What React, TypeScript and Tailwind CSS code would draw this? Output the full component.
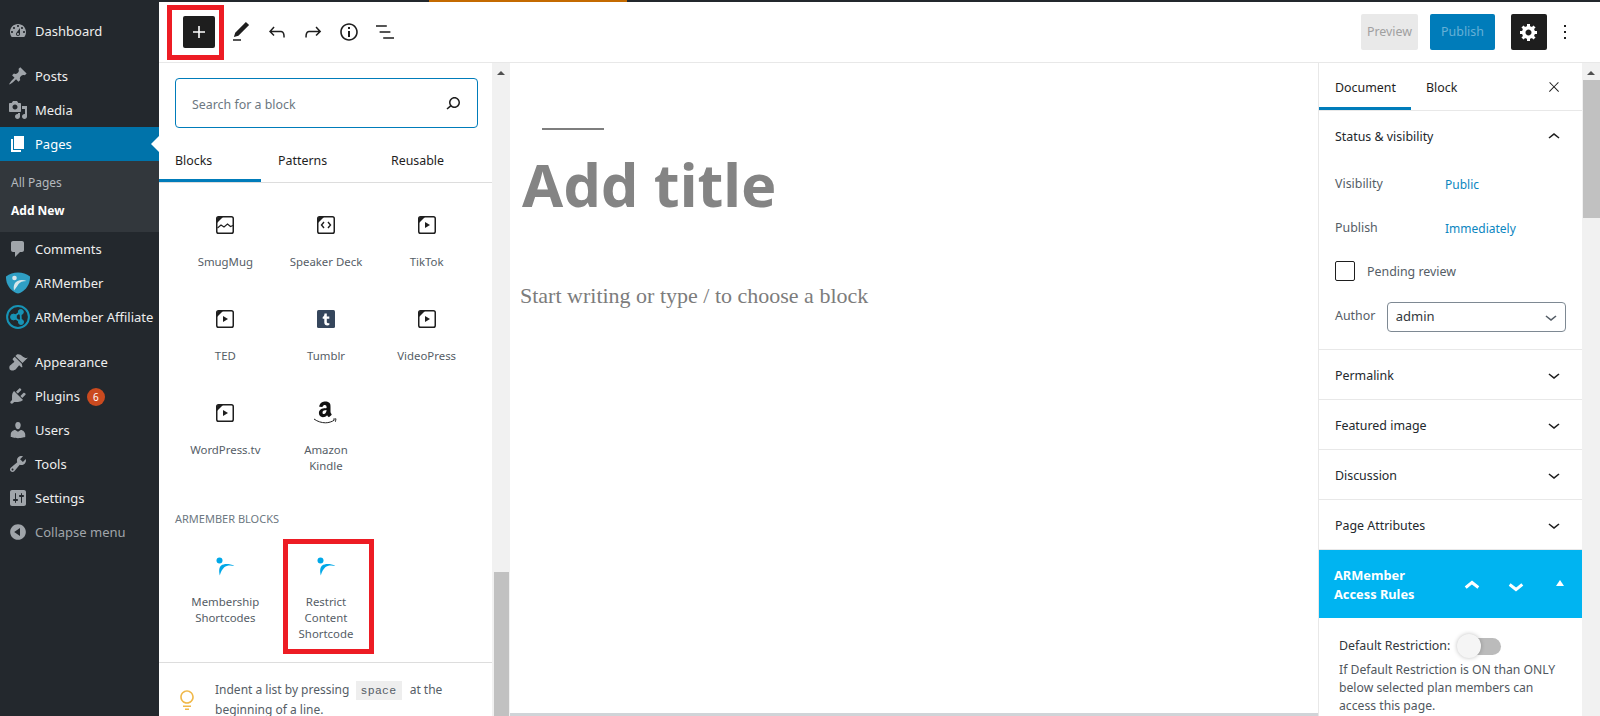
import type { ReactNode } from "react";

const SANS = "font-['Noto_Sans',sans-serif]";

type IconProps = { d: string; box?: number; className: string };

const Icon = ({ d, box = 24, className }: IconProps) => (
  <svg viewBox={`0 0 ${box} ${box}`} className={className} fill="currentColor">
    <path d={d} />
  </svg>
);

// dashicons for the admin menu
const DASH = {
  dashboard:
    "M3.76 16h12.48c1.1-1.37 1.76-3.11 1.76-5 0-4.42-3.58-8-8-8s-8 3.58-8 8c0 1.89.66 3.63 1.76 5zM10 4c.55 0 1 .45 1 1s-.45 1-1 1-1-.45-1-1 .45-1 1-1zM6 6c.55 0 1 .45 1 1s-.45 1-1 1-1-.45-1-1 .45-1 1-1zm8 0c.55 0 1 .45 1 1s-.45 1-1 1-1-.45-1-1 .45-1 1-1zm-5.37 5.55L12 7v6c0 1.1-.9 2-2 2s-2-.9-2-2c0-.57.24-1.08.63-1.45zM4 10c.55 0 1 .45 1 1s-.45 1-1 1-1-.45-1-1 .45-1 1-1zm12 0c.55 0 1 .45 1 1s-.45 1-1 1-1-.45-1-1 .45-1 1-1zm-5 3c0-.55-.45-1-1-1s-1 .45-1 1 .45 1 1 1 1-.45 1-1z",
  posts:
    "M10.44 3.02l1.82-1.82 6.36 6.35-1.83 1.82c-1.05-.68-2.48-.57-3.41.36l-.75.75c-.92.93-1.04 2.35-.35 3.41l-1.83 1.82-2.41-2.41-2.8 2.79c-.42.42-3.38 2.71-3.8 2.29s1.86-3.39 2.28-3.81l2.79-2.79L4.1 9.36l1.83-1.82c1.05.69 2.48.57 3.4-.36l.75-.75c.93-.92 1.05-2.35.36-3.41z",
  media:
    "M13 11V4c0-.55-.45-1-1-1h-1.67L9 1H5L3.67 3H2c-.55 0-1 .45-1 1v7c0 .55.45 1 1 1h10c.55 0 1-.45 1-1zM7 4.5c1.38 0 2.5 1.12 2.5 2.5S8.38 9.5 7 9.5 4.5 8.38 4.5 7 5.62 4.5 7 4.5zM14 6h5v10.5c0 1.38-1.12 2.5-2.5 2.5S14 17.88 14 16.5s1.12-2.5 2.5-2.5c.17 0 .34.02.5.05V9h-3V6zm-4 8.05V13h2v3.5c0 1.38-1.12 2.5-2.5 2.5S7 17.88 7 16.5 8.12 14 9.5 14c.17 0 .34.02.5.05z",
  pages: "M6 15V2h10v13H6zm-1 1h8v2H3V5h2v11z",
  comments: "M5 2h9c1.1 0 2 .9 2 2v7c0 1.1-.9 2-2 2h-2l-5 5v-5H5c-1.1 0-2-.9-2-2V4c0-1.1.9-2 2-2z",
  appearance:
    "M14.48 11.06L7.41 3.99l1.5-1.5c.5-.56 2.3-.47 3.51.32 1.21.8 1.43 1.28 2.91 2.1 1.18.64 2.45 1.26 4.45.85zm-.71.71L6.7 4.7 4.93 6.47c-.39.39-.39 1.02 0 1.41l1.06 1.06c.39.39.39 1.03 0 1.42-.6.6-1.43 1.11-2.21 1.69-.35.26-.7.53-1.01.84C1.43 13.23.94 15.07 1.59 17c.1.3.26.57.5.8s.5.4.8.5c1.93.65 3.77.16 5.12-1.19.3-.31.57-.66.84-1.01.57-.78 1.08-1.61 1.69-2.21.39-.39 1.03-.39 1.42 0l1.06 1.06c.39.39 1.02.39 1.41 0z",
  plugins:
    "M13.11 4.36L9.87 7.6 8 5.73l3.24-3.24c.35-.34 1.05-.2 1.56.32.52.51.66 1.21.31 1.55zm-8 1.77l.91-1.12 9.01 9.01-1.19.84c-.71.71-2.63 1.16-3.82 1.16H6.14L4.9 17.26c-.59.59-1.54.59-2.12 0-.59-.58-.59-1.53 0-2.12l1.24-1.24v-3.88c0-1.13.4-3.19 1.09-3.89zm7.26 3.97l3.24-3.24c.34-.35 1.04-.21 1.55.31.52.51.66 1.21.31 1.55l-3.24 3.25z",
  users:
    "M10 9.25c-2.27 0-2.73-3.44-2.73-3.44C7 4.02 7.82 2 9.97 2c2.16 0 2.98 2.02 2.71 3.81 0 0-.41 3.44-2.68 3.44zm0 2.57L12.72 10c2.39 0 4.52 2.33 4.52 4.53v2.49s-3.65 1.13-7.24 1.13c-3.65 0-7.24-1.13-7.24-1.13v-2.49c0-2.25 1.94-4.48 4.47-4.48z",
  tools:
    "M16.68 9.77c-1.34 1.34-3.3 1.67-4.95.99l-5.41 6.52c-.99.99-2.59.99-3.58 0s-.99-2.59 0-3.57l6.52-5.42c-.68-1.65-.35-3.61.99-4.95 1.28-1.28 3.12-1.62 4.72-1.06l-2.89 2.89 2.82 2.82 2.86-2.87c.53 1.58.18 3.39-1.08 4.65zM3.81 16.21c.4.39 1.04.39 1.43 0 .4-.4.4-1.04 0-1.43-.39-.4-1.03-.4-1.43 0-.39.39-.39 1.03 0 1.43z",
  settings:
    "M18 16V4c0-1.1-.9-2-2-2H4c-1.1 0-2 .9-2 2v12c0 1.1.9 2 2 2h12c1.1 0 2-.9 2-2zM8 11h1c.55 0 1 .45 1 1s-.45 1-1 1H8v1.5c0 .28-.22.5-.5.5s-.5-.22-.5-.5V13H6c-.55 0-1-.45-1-1s.45-1 1-1h1V5.5c0-.28.22-.5.5-.5s.5.22.5.5V11zm5-2h-1c-.55 0-1-.45-1-1s.45-1 1-1h1V5.5c0-.28.22-.5.5-.5s.5.22.5.5V7h1c.55 0 1 .45 1 1s-.45 1-1 1h-1v5.5c0 .28-.22.5-.5.5s-.5-.22-.5-.5V9z",
  collapse: "M10 2.16c4.33 0 7.84 3.51 7.84 7.84s-3.51 7.84-7.84 7.84S2.16 14.33 2.16 10 5.71 2.16 10 2.16zm2 11.72V6.12L6.18 9.97z",
  cog: "M18 12h-2.18c-.17.7-.44 1.35-.81 1.93l1.54 1.54-2.1 2.1-1.54-1.54c-.58.36-1.23.63-1.91.79V19H8v-2.18c-.68-.16-1.33-.43-1.91-.79l-1.54 1.54-2.12-2.12 1.54-1.54c-.36-.58-.63-1.23-.79-1.91H1V9.03h2.17c.16-.7.44-1.35.8-1.94L2.43 5.55l2.1-2.1 1.54 1.54c.58-.37 1.24-.64 1.93-.81V2h3v2.18c.68.16 1.33.43 1.91.79l1.54-1.54 2.12 2.12-1.54 1.54c.36.59.64 1.24.8 1.94H18V12zm-8.5 1.5c1.66 0 3-1.34 3-3s-1.34-3-3-3-3 1.34-3 3 1.34 3 3 3z",
};

// block editor toolbar icons
const WP = {
  plus: "M18 11.2h-5.2V6h-1.6v5.2H6v1.6h5.2V18h1.6v-5.2H18z",
  edit: "M20.1 5.1L16.9 2 6.2 12.7l-1.3 4.4 4.5-1.3L20.1 5.1zM4 20.8h8v-1.5H4v1.5z",
  undo: "M18.3 11.7c-.6-.6-1.4-.9-2.3-.9H6.7l2.9-3.3-1.1-1-4.5 5L8.5 16l1-1-2.7-2.7H16c.5 0 .9.2 1.3.5 1 1 1 3.4 1 4.5v.3h1.5v-.2c0-1.5 0-4.3-1.5-5.7z",
  redo: "M15.6 6.5l-1.1 1 2.9 3.3H8c-.9 0-1.7.3-2.3.9-1.4 1.5-1.4 4.2-1.4 5.6v.2h1.5v-.3c0-1.1 0-3.5 1-4.5.3-.3.7-.5 1.3-.5h9.2L14.5 15l1.1 1.1 4.6-4.6-4.6-5z",
  info: "M12 3.2c-4.8 0-8.8 3.9-8.8 8.8 0 4.8 3.9 8.8 8.8 8.8 4.8 0 8.8-3.9 8.8-8.8 0-4.8-4-8.8-8.8-8.8zm0 16c-4 0-7.2-3.3-7.2-7.2C4.8 8 8 4.8 12 4.8s7.2 3.3 7.2 7.2c0 4-3.2 7.2-7.2 7.2zM11 17h2v-6h-2v6zm0-8h2V7h-2v2z",
  list: "M13.8 5.2H3v1.5h10.8V5.2zm-3.6 12v1.5H21v-1.5H10.2zm7.2-6H6.6v1.5h10.8v-1.5z",
  more: "M13 19h-2v-2h2v2zm0-6h-2v-2h2v2zm0-6h-2V5h2v2z",
  search:
    "M13.5 6C10.5 6 8 8.5 8 11.5c0 1.1.3 2.1.9 3l-3.4 3 1 1.1 3.4-2.9c1 .9 2.2 1.4 3.6 1.4 3 0 5.5-2.5 5.5-5.5C19 8.5 16.5 6 13.5 6zm0 9.5c-2.2 0-4-1.8-4-4s1.8-4 4-4 4 1.8 4 4-1.8 4-4 4z",
  close: "M13 11.8l6.1-6.3-1-1-6.1 6.2-6.1-6.2-1 1 6.1 6.3-6.5 6.7 1 1 6.5-6.6 6.5 6.6 1-1z",
  up: "M6.5 12.4L12 8l5.5 4.4-.9 1.2L12 10l-4.5 3.6-1-1.2z",
  down: "M17.5 11.6L12 16l-5.5-4.4.9-1.2L12 14l4.5-3.6 1 1.2z",
  bulb: "M12 15.8c-3.7 0-6.8-3-6.8-6.8s3-6.8 6.8-6.8c3.7 0 6.8 3 6.8 6.8s-3.1 6.8-6.8 6.8zm0-12C9.1 3.8 6.8 6.1 6.8 9s2.4 5.2 5.2 5.2c2.9 0 5.2-2.4 5.2-5.2S14.9 3.8 12 3.8zM8 17.5h8V19H8zM10 20.5h4V22h-4z",
};

const ArmemberShield = () => (
  <svg viewBox="0 0 24 22" className="h-[22px] w-[24px]">
    <path d="M0 4.500C3.500 1.800 7.500 .5 12 .5s8.500 1.300 12 4c.3 7-3.500 13.500-10 16.500-1.300.5-2.700.5-4 0C3.500 18 -.3 11.500 0 4.500z" fill="#2f9fc4" />
    <circle cx="8.500" cy="6" r="2.300" fill="#d8e6ea" />
    <path d="M8 18.500c-.8-4.500.2-8 3.500-9.500 2.800-1.200 6-1.200 9 0-3.800 0-6.800 1-8.300 3.500-1.200 2-2.200 3.500-4.200 6z" fill="#d8e6ea" />
  </svg>
);

const AffiliateLogo = () => (
  <svg viewBox="0 0 24 24" className="h-[24px] w-[24px]" fill="#1793b5" stroke="#1793b5">
    <circle cx="12" cy="12" r="10.900" fill="none" strokeWidth="2" />
    <path d="M14.500 6.800L7.500 12l7.500 5.200L14.500 6.800" fill="none" strokeWidth="1.800" />
    <circle cx="14.800" cy="7" r="2.500" />
    <circle cx="7.500" cy="12" r="2.900" />
    <circle cx="15" cy="17" r="2.500" />
  </svg>
);

const Tiny = ({ kind }: { kind: "image" | "code" | "video" }) => (
  <svg viewBox="0 0 18 18" className="h-[18px] w-[18px]" fill="none">
    <rect x="0.750" y="0.750" width="16.500" height="16.500" rx="1.800" stroke="#1e1e1e" strokeWidth="1.500" />
    <path d="M1 7V2.500Q1 1 2.500 1H7z" fill="#1e1e1e" />
    {kind === "image" && <path d="M1.500 12l3.500-3 3 2 3.500-3 3 2.500 2.500-1" stroke="#1e1e1e" strokeWidth="1.100" />}
    {kind === "code" && <path d="M7 6L4.500 9 7 12M11 6l2.500 3L11 12" stroke="#1e1e1e" strokeWidth="1.400" />}
    {kind === "video" && <path d="M7 6l5 3-5 3z" fill="#1e1e1e" />}
  </svg>
);

const TumblrIcon = () => (
  <svg viewBox="0 0 18 18" className="h-[18px] w-[18px]">
    <rect width="18" height="18" rx="1.500" fill="#35465c" />
    <path d="M7.500 3.500h2.300v3h2.500v2.200H9.800v3.400c0 1 .8 1.300 2.500.9v2.100c-3 .8-5-.1-5-2.600V8.700H5.700V6.900c1.200-.4 1.700-1.800 1.800-3.400z" fill="#fff" />
  </svg>
);

const AmazonIcon = () => (
  <svg viewBox="0 0 26 24" className="h-[24px] w-[26px]">
    <path
      d="M15.500 9.500V9c-1.900.1-4 .5-4 2.500 0 1 .5 1.600 1.400 1.600.7 0 1.300-.4 1.700-1.100.5-.800.900-1.500.900-2.500zm2.700 6.500c-.2.200-.4.200-.6.100-.9-.7-1-1.100-1.500-1.800-1.400 1.500-2.400 1.900-4.300 1.900-2.200 0-3.900-1.400-3.900-4.100 0-2.100 1.100-3.600 2.800-4.300 1.400-.6 3.400-.7 4.900-.9v-.3c0-.6 0-1.400-.3-1.900-.3-.5-.9-.7-1.500-.7-1 0-1.900.5-2.100 1.600 0 .2-.2.500-.5.500l-2.600-.3c-.2 0-.5-.2-.4-.6C9.100 1.500 11.900.5 14.400.5c1.300 0 2.900.3 3.900 1.300 1.300 1.200 1.200 2.800 1.200 4.600v4.200c0 1.300.5 1.800 1 2.500.2.300.2.600 0 .8z"
      fill="#111"
      transform="translate(-2 0)"
    />
    <path d="M1 18c3.500 2.600 7.800 3.800 11.500 3.800 3 0 6.500-1 9-2.800" fill="none" stroke="#222" strokeWidth="1" />
    <path d="M20 18.200l3-.4-.6 3" fill="none" stroke="#222" strokeWidth="0.900" />
  </svg>
);

const BlockLogo = () => (
  <svg viewBox="0 0 20 20" className="h-[20px] w-[20px]" fill="#00a8e8">
    <circle cx="4.500" cy="3.500" r="3" />
    <path d="M4.800 18.500C3.800 14 3.900 10.500 6.200 8.600 9 6.500 14.500 6.500 19.500 9c-4-1-8-.8-10.200 1.200-2.200 2.100-3.500 4.700-4.500 8.300z" />
  </svg>
);

type MenuItem = { icon?: string; logo?: ReactNode; label: string; badge?: string; dim?: boolean };

const MENU_TOP: MenuItem[] = [{ icon: DASH.dashboard, label: "Dashboard" }];
const MENU_MID: MenuItem[] = [
  { icon: DASH.posts, label: "Posts" },
  { icon: DASH.media, label: "Media" },
];
const MENU_AFTER: MenuItem[] = [
  { icon: DASH.comments, label: "Comments" },
  { logo: <ArmemberShield />, label: "ARMember" },
  { logo: <AffiliateLogo />, label: "ARMember Affiliate" },
];
const MENU_BOTTOM: MenuItem[] = [
  { icon: DASH.appearance, label: "Appearance" },
  { icon: DASH.plugins, label: "Plugins", badge: "6" },
  { icon: DASH.users, label: "Users" },
  { icon: DASH.tools, label: "Tools" },
  { icon: DASH.settings, label: "Settings" },
  { icon: DASH.collapse, label: "Collapse menu", dim: true },
];

const MenuRow = ({ item }: { item: MenuItem }) => (
  <div className="flex h-[34px] items-center">
    <div className={`flex w-[35px] shrink-0 justify-center text-[#a0a5aa] ${item.logo ? "" : "pl-[1px]"}`}>
      {item.logo ?? <Icon d={item.icon!} box={20} className="h-[20px] w-[20px]" />}
    </div>
    <span className={`whitespace-nowrap pt-[2px] text-[13px] ${item.dim ? "text-[#a0a5aa]" : "text-[#eee]"}`}>{item.label}</span>
    {item.badge && (
      <span className="ml-[7px] mt-[2px] flex h-[18px] w-[18px] items-center justify-center rounded-full bg-[#ca4a1f] text-[10px] text-white">
        {item.badge}
      </span>
    )}
  </div>
);

const AdminMenu = () => (
  <aside className="flex w-[159px] shrink-0 flex-col bg-[#23282d] pt-[14px]">
    {MENU_TOP.map((m) => (
      <MenuRow key={m.label} item={m} />
    ))}
    <div className="h-[11px]" />
    {MENU_MID.map((m) => (
      <MenuRow key={m.label} item={m} />
    ))}
    <div className="relative flex h-[34px] items-center bg-[#0073aa] text-white">
      <div className="flex w-[35px] justify-center pl-[1px]">
        <Icon d={DASH.pages} box={20} className="h-[20px] w-[20px]" />
      </div>
      <span className="pt-[2px] text-[13px]">Pages</span>
      <div className="absolute right-0 top-[9px] h-0 w-0 border-y-[8px] border-r-[8px] border-y-transparent border-r-white" />
    </div>
    <div className="flex h-[71px] flex-col justify-center gap-[8px] bg-[#32373c] pl-[11px] text-[12px]">
      <span className="leading-[20px] text-[#b4b9be]">All Pages</span>
      <span className="font-bold leading-[20px] text-white">Add New</span>
    </div>
    {MENU_AFTER.map((m) => (
      <MenuRow key={m.label} item={m} />
    ))}
    <div className="h-[11px]" />
    {MENU_BOTTOM.map((m) => (
      <MenuRow key={m.label} item={m} />
    ))}
  </aside>
);

const TopBar = () => (
  <div className="relative flex h-[61px] shrink-0 items-center border-b border-[#e8e8e8] bg-white">
    <div className="ml-[24px] flex h-[32px] w-[32px] items-center justify-center rounded-[2px] bg-[#1e1e1e] text-white">
      <Icon d={WP.plus} className="h-[24px] w-[24px]" />
    </div>
    <div className="ml-[14px] flex items-center gap-[12px] text-[#1e1e1e]">
      <Icon d={WP.edit} className="h-[24px] w-[24px]" />
      <Icon d={WP.undo} className="h-[24px] w-[24px]" />
      <Icon d={WP.redo} className="h-[24px] w-[24px]" />
      <Icon d={WP.info} className="h-[24px] w-[24px]" />
      <Icon d={WP.list} className="h-[24px] w-[24px]" />
    </div>
    <div className="ml-auto flex items-center pr-[23px]">
      <div className="flex h-[36px] w-[57px] items-center justify-center rounded-[2px] bg-[#e9e9e9] text-[12.4px] text-[#a0a0a0]">Preview</div>
      <div className="ml-[12px] flex h-[36px] w-[65px] items-center justify-center rounded-[2px] bg-[#007cba] text-[12.4px] text-[#66b0d6]">Publish</div>
      <div className="ml-[16px] flex h-[36px] w-[36px] items-center justify-center rounded-[2px] bg-[#1e1e1e] text-white">
        <Icon d={DASH.cog} box={20} className="h-[20px] w-[20px]" />
      </div>
      <Icon d={WP.more} className="ml-[6px] h-[24px] w-[24px] text-[#1e1e1e]" />
    </div>
    {/* annotation round the inserter toggle */}
    <div className="absolute left-[8px] top-[3px] h-[55px] w-[57px] border-[5px] border-[#ed1c24]" />
  </div>
);

type BlockItem = { name: string[]; icon: ReactNode; tight?: boolean };

const BLOCKS: BlockItem[] = [
  { name: ["SmugMug"], icon: <Tiny kind="image" /> },
  { name: ["Speaker Deck"], icon: <Tiny kind="code" /> },
  { name: ["TikTok"], icon: <Tiny kind="video" /> },
  { name: ["TED"], icon: <Tiny kind="video" /> },
  { name: ["Tumblr"], icon: <TumblrIcon /> },
  { name: ["VideoPress"], icon: <Tiny kind="video" /> },
  { name: ["WordPress.tv"], icon: <Tiny kind="video" /> },
  { name: ["Amazon", "Kindle"], icon: <AmazonIcon /> },
];

const BlockTile = ({ item }: { item: BlockItem }) => (
  <div className="flex flex-col items-center">
    <div className="flex h-[24px] items-center justify-center">{item.icon}</div>
    <div className={`text-center text-[11.4px] leading-[16px] text-[#555d66] ${item.tight ? "mt-[15px]" : "mt-[17px]"}`}>
      {item.name.map((line) => (
        <div key={line}>{line}</div>
      ))}
    </div>
  </div>
);

const Scrollbar = ({ thumb }: { thumb: "top" | "bottom" }) => (
  <div className="relative w-[18px] shrink-0 bg-[#f1f1f1]">
    <div className="absolute left-[5px] top-[8px] h-0 w-0 border-x-[4px] border-b-[4px] border-x-transparent border-b-[#505050]" />
    {thumb === "top" ? (
      <div className="absolute left-[1px] right-0 top-[17px] h-[138px] bg-[#c1c1c1]" />
    ) : (
      <div className="absolute bottom-0 left-[2px] right-[1px] h-[144px] bg-[#c1c1c1]" />
    )}
  </div>
);

const Inserter = () => (
  <div className="flex w-[351px] shrink-0">
    <div className="flex w-[333px] flex-col overflow-hidden bg-white">
      <div className="shrink-0 px-[16px] pt-[15px]">
        <div className="flex h-[50px] w-[303px] items-center justify-between rounded-[4px] border-[1.5px] border-[#007cba] pl-[16px] pr-[12px] text-[12.4px] text-[#6c7781]">
          <span className="pt-[4px]">Search for a block</span>
          <Icon d={WP.search} className="h-[24px] w-[24px] text-[#1e1e1e]" />
        </div>
      </div>
      <div className="flex h-[55px] shrink-0 items-stretch border-b border-[#ddd] text-[12.4px] text-[#1e1e1e]">
        <div className="flex w-[102px] items-center border-b-[3px] border-[#007cba] pl-[16px] pt-[16px]">Blocks</div>
        <div className="flex w-[118px] items-center pl-[17px] pt-[13px]">Patterns</div>
        <div className="flex items-center pl-[12px] pt-[13px]">Reusable</div>
      </div>
      <div className="relative flex-1">
        <div className="ml-[16px] mt-[30px] grid w-[302px] grid-cols-3 gap-y-[38px]">
          {BLOCKS.map((b) => (
            <div key={b.name[0]} className="h-[56px]">
              <BlockTile item={b} />
            </div>
          ))}
        </div>
        <div className="ml-[16px] mt-[54px] text-[11px] uppercase leading-[16px] text-[#6c7781]">ARMember Blocks</div>
        <div className="ml-[16px] mt-[28px] grid w-[302px] grid-cols-3">
          <BlockTile item={{ name: ["Membership", "Shortcodes"], icon: <BlockLogo />, tight: true }} />
          <BlockTile item={{ name: ["Restrict", "Content", "Shortcode"], icon: <BlockLogo />, tight: true }} />
        </div>
        {/* annotation round the block */}
        <div className="absolute left-[124px] top-[356px] h-[115px] w-[91px] border-[5px] border-[#ed1c24]" />
        <div className="mt-[20px] flex border-t border-[#ddd] pl-[16px] pt-[17px]">
          <Icon d={WP.bulb} className="mt-[8px] h-[24px] w-[24px] text-[#f0b849]" />
          <div className="ml-[16px] w-[260px] text-[12px] leading-[20px] text-[#555d66]">
            Indent a list by pressing{" "}
            <code className="ml-[3px] mr-[5px] bg-[#eee] px-[5px] py-[3px] font-['Liberation_Mono',monospace] text-[11.5px] leading-none tracking-[0.3px]">space</code>{" "}
            at the beginning of a line.
          </div>
        </div>
      </div>
    </div>
    <Scrollbar thumb="bottom" />
  </div>
);

const Editor = () => (
  <main className="relative flex-1 bg-white">
    <div className="ml-[32px] mt-[65px] h-[2px] w-[62px] bg-[#7e7e7e]" />
    <h1 className="ml-[12px] mt-[14px] text-[59.5px] font-bold leading-[80px] text-[#848484]">Add title</h1>
    <p className="ml-[10px] mt-[57px] font-['Liberation_Serif',serif] text-[22px] leading-[30px] text-[#7c7c7c]">
      Start writing or type / to choose a block
    </p>
    <div className="absolute inset-x-0 bottom-0 h-[3px] bg-[#d0d4d8]" />
  </main>
);

const Collapsed = ({ title }: { title: string }) => (
  <div className="flex h-[50px] items-center justify-between border-b border-[#e8e8e8] pl-[16px] pr-[16px]">
    <span className="mt-[4px] text-[12.4px] text-[#23282d]">{title}</span>
    <Icon d={WP.down} className="h-[24px] w-[24px] text-[#1e1e1e]" />
  </div>
);

const Settings = () => (
  <div className="flex w-[282px] shrink-0">
    <div className="w-[264px] overflow-hidden border-l border-[#e8e8e8] bg-white">
      <div className="flex h-[48px] items-stretch border-b border-[#e8e8e8] text-[12.4px] text-[#1e1e1e]">
        <div className="flex w-[92px] items-center border-b-[3px] border-[#007cba] pl-[16px] pt-[7px]">Document</div>
        <div className="flex items-center pl-[15px] pt-[4px]">Block</div>
        <div className="ml-auto flex items-center pr-[20px]">
          <Icon d={WP.close} className="h-[16px] w-[16px]" />
        </div>
      </div>
      <div className="h-[239px] border-b border-[#e8e8e8] px-[16px]">
        <div className="flex h-[52px] items-center justify-between">
          <span className="text-[12.4px] text-[#23282d]">Status &amp; visibility</span>
          <Icon d={WP.up} className="h-[24px] w-[24px] text-[#1e1e1e]" />
        </div>
        <div className="mt-[12px] flex text-[12.4px] leading-[18px]">
          <span className="w-[110px] text-[#555d66]">Visibility</span>
          <span className="mt-[1px] text-[12px] text-[#0b86bf]">Public</span>
        </div>
        <div className="mt-[25px] flex text-[12.4px] leading-[18px]">
          <span className="w-[110px] text-[#555d66]">Publish</span>
          <span className="mt-[1px] text-[12px] text-[#0b86bf]">Immediately</span>
        </div>
        <div className="mt-[23px] flex items-center">
          <div className="h-[20px] w-[20px] rounded-[2px] border border-[#1e1e1e]" />
          <span className="ml-[12px] pt-[2px] text-[12.4px] text-[#555d66]">Pending review</span>
        </div>
        <div className="mt-[20px] flex items-center">
          <span className="w-[52px] text-[12.4px] text-[#555d66]">Author</span>
          <div className="flex h-[30px] w-[180px] items-center justify-between rounded-[4px] border border-[#7e8993] pl-[8px] pr-[2px] text-[13px] text-[#32373c]">
            <span>admin</span>
            <Icon d={WP.down} className="h-[24px] w-[24px] text-[#555d66]" />
          </div>
        </div>
      </div>
      <Collapsed title="Permalink" />
      <Collapsed title="Featured image" />
      <Collapsed title="Discussion" />
      <Collapsed title="Page Attributes" />
      <div className="flex h-[68px] items-center bg-[#00b4f1] pl-[15px] text-white">
        <div className="w-[120px] pt-[2px] text-[12.8px] font-bold leading-[19px]">
          ARMember
          <br />
          Access Rules
        </div>
        <Icon d={WP.up} className="mt-[4px] ml-[4px] h-[28px] w-[28px] stroke-white" />
        <Icon d={WP.down} className="mt-[4px] ml-[16px] h-[28px] w-[28px] stroke-white" />
        <div className="-mt-[2px] ml-[26px] h-0 w-0 border-x-[4.5px] border-b-[6px] border-x-transparent border-b-white" />
      </div>
      <div className="pl-[20px] pt-[19px] text-[12.2px] leading-[18px] text-[#50575e]">
        <div className="flex items-center">
          <span className="text-[12.4px] text-[#32373c]">Default Restriction:</span>
          <div className="relative ml-[7px] h-[17px] w-[44px]">
            <div className="absolute bottom-0 right-0 top-0 w-[33px] rounded-[9px] bg-[#bbb]" />
            <div className="absolute -top-[4px] left-0 h-[24px] w-[24px] rounded-full bg-[#f5f5f5] shadow-[0_0_4px_rgba(0,0,0,0.25)]" />
          </div>
        </div>
        <div className="mt-[6px] w-[225px]">If Default Restriction is ON than ONLY below selected plan members can access this page.</div>
      </div>
    </div>
    <Scrollbar thumb="top" />
  </div>
);

export default function App() {
  return (
    <div className={`flex h-[716px] w-[1600px] overflow-hidden bg-white ${SANS}`}>
      <AdminMenu />
      <div className="flex min-w-0 flex-1 flex-col">
        <div className="flex h-[2px] shrink-0 bg-[#23282d]">
          <div className="ml-[270px] h-full w-[198px] bg-[#c46a00]" />
        </div>
        <TopBar />
        <div className="flex min-h-0 flex-1">
          <Inserter />
          <Editor />
          <Settings />
        </div>
      </div>
    </div>
  );
}
